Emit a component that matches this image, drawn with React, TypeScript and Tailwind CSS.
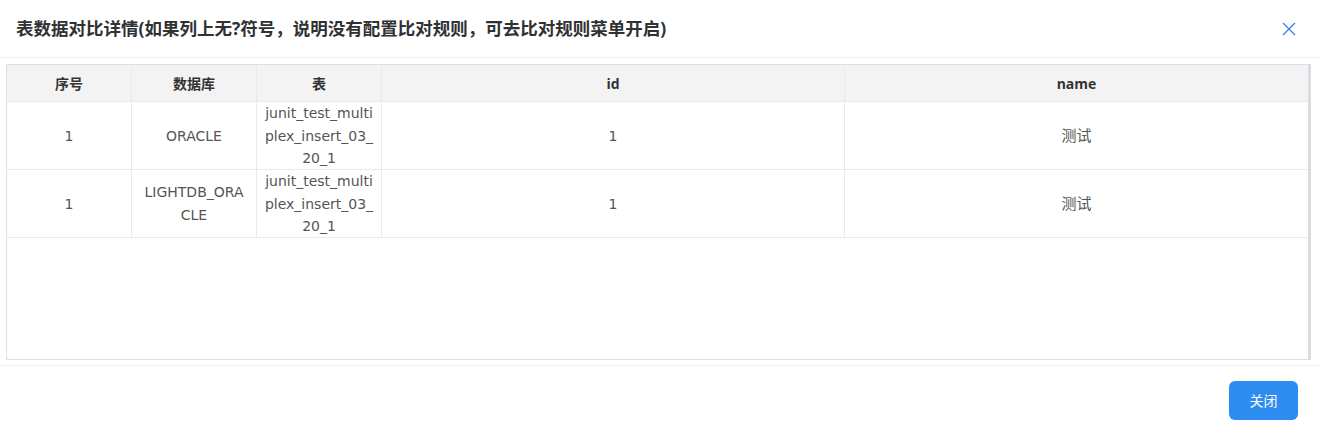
import React from 'react';

type Row = { no: string; db: string[]; table: string[]; id: string; name: string };

const tableLines = ['junit_test_multi', 'plex_insert_03_', '20_1'];

const rows: Row[] = [
  { no: '1', db: ['ORACLE'], table: tableLines, id: '1', name: '测试' },
  { no: '1', db: ['LIGHTDB_ORA', 'CLE'], table: tableLines, id: '1', name: '测试' }
];

const font = { fontFamily: '"Open Sans", "Noto Sans CJK SC", sans-serif' };
const cellFont = { fontFamily: '"DejaVu Sans", "Noto Sans CJK SC", sans-serif' };

function Lines({ lines }: { lines: string[] }) {
  return (
    <div className="flex flex-col items-center">
      {lines.map((l) => (
        <span key={l}>{l}</span>
      ))}
    </div>
  );
}

export default function App() {
  return (
    <div className="flex h-[427px] w-[1320px] flex-col bg-white text-[#333]" style={font}>
      <div className="flex h-[58px] shrink-0 items-center justify-between border-b border-[#f0f0f0] pr-[21px] pl-[16px]">
        <h1 className="text-[17.5px] font-bold text-[#303133]">
          表数据对比详情(如果列上无?符号，说明没有配置比对规则，可去比对规则菜单开启)
        </h1>
        <button className="flex h-5 w-5 items-center justify-center text-[#3b7de9]">
          <svg width="16" height="16" viewBox="0 0 16 16" fill="none" stroke="currentColor" strokeWidth="1.3">
            <path d="M2 2L14 14M14 2L2 14" />
          </svg>
        </button>
      </div>

      <div className="pt-[6px] pr-[9px] pl-[6px]">
        <div className="flex h-[296px] flex-col border border-r-[3px] border-[#dcdfe6] border-r-[#d9dce2]">
          <div className="grid h-[37px] grid-cols-[125px_125px_125px_463px_1fr] border-b border-[#e8eaec] bg-[#f3f3f3] text-[14px] font-bold text-[#333]">
            {['序号', '数据库', '表', 'id', 'name'].map((h, i) => (
              <div key={h} className={`flex items-center justify-center ${i < 4 ? 'border-r border-[#e8eaec]' : ''}`}>
                {h}
              </div>
            ))}
          </div>
          {rows.map((r, idx) => (
            <div
              key={idx}
              className="grid h-[68px] grid-cols-[125px_125px_125px_463px_1fr] border-b border-[#e8eaec] text-[14px] leading-[22.5px] text-[#555]"
              style={cellFont}
            >
              <div className="flex items-center justify-center border-r border-[#e8eaec]">{r.no}</div>
              <div className="flex items-center justify-center border-r border-[#e8eaec]">
                <Lines lines={r.db} />
              </div>
              <div className="flex items-center justify-center border-r border-[#e8eaec]">
                <Lines lines={r.table} />
              </div>
              <div className="flex items-center justify-center border-r border-[#e8eaec]">{r.id}</div>
              <div className="flex items-center justify-center text-[15px]">{r.name}</div>
            </div>
          ))}
        </div>
      </div>

      <div className="mt-[5px] flex flex-1 items-start justify-end border-t border-[#f0f0f0] pt-[15px] pr-[22px]">
        <button className="flex h-[39px] w-[69px] items-center justify-center rounded-[6px] bg-[#2d8cf0] text-[14px] text-white">
          关闭
        </button>
      </div>
    </div>
  );
}
